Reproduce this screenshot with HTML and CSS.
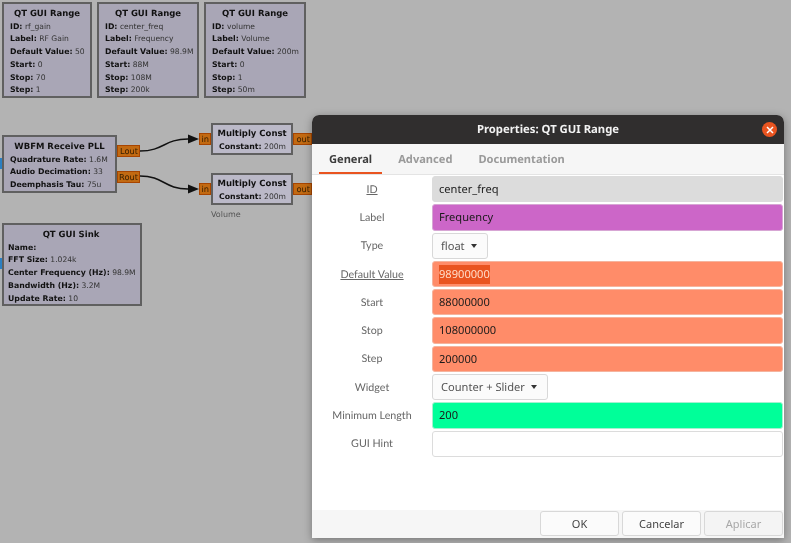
FILE: index.html
```html
<!DOCTYPE html>
<html>
  <head>
    <title>Properties: QT GUI Range</title>
    <link rel="stylesheet" href="styles.css">
  </head>
  <body>
    <div class="canvas">
      <div class="block range-a">
        <div class="block-title">QT GUI Range</div>
        <div><b>ID:</b> rf_gain</div>
        <div><b>Label:</b> RF Gain</div>
        <div><b>Default Value:</b> 50</div>
        <div><b>Start:</b> 0</div>
        <div><b>Stop:</b> 70</div>
        <div><b>Step:</b> 1</div>
      </div>
      <div class="block range-b">
        <div class="block-title">QT GUI Range</div>
        <div><b>ID:</b> center_freq</div>
        <div><b>Label:</b> Frequency</div>
        <div><b>Default Value:</b> 98.9M</div>
        <div><b>Start:</b> 88M</div>
        <div><b>Stop:</b> 108M</div>
        <div><b>Step:</b> 200k</div>
      </div>
      <div class="block range-c">
        <div class="block-title">QT GUI Range</div>
        <div><b>ID:</b> volume</div>
        <div><b>Label:</b> Volume</div>
        <div><b>Default Value:</b> 200m</div>
        <div><b>Start:</b> 0</div>
        <div><b>Stop:</b> 1</div>
        <div><b>Step:</b> 50m</div>
      </div>

      <div class="block wbfm">
        <div class="block-title">WBFM Receive PLL</div>
        <div><b>Quadrature Rate:</b> 1.6M</div>
        <div><b>Audio Decimation:</b> 33</div>
        <div><b>Deemphasis Tau:</b> 75u</div>
      </div>
      <div class="block sink">
        <div class="block-title">QT GUI Sink</div>
        <div><b>Name:</b></div>
        <div><b>FFT Size:</b> 1.024k</div>
        <div><b>Center Frequency (Hz):</b> 98.9M</div>
        <div><b>Bandwidth (Hz):</b> 3.2M</div>
        <div><b>Update Rate:</b> 10</div>
      </div>
      <div class="block mult mult-a">
        <div class="block-title">Multiply Const</div>
        <div><b>Constant:</b> 200m</div>
      </div>
      <div class="block mult mult-b">
        <div class="block-title">Multiply Const</div>
        <div><b>Constant:</b> 200m</div>
      </div>
      <div class="block-note">Volume</div>

      <div class="port lout">Lout</div>
      <div class="port rout">Rout</div>
      <div class="port in-a">in</div>
      <div class="port in-b">in</div>
      <div class="port out-a">out</div>
      <div class="port out-b">out</div>
      <div class="port-blue blue-a"></div>
      <div class="port-blue blue-b"></div>

      <svg class="wires" width="791" height="543" viewBox="0 0 791 543">
        <path d="M140 151 C164 151 164 139 188 139" fill="none" stroke="#111" stroke-width="1.5"/>
        <path d="M188 134.500 L199 139 L188 143.500 Z" fill="#111"/>
        <path d="M140 176 C164 176 164 189 188 189" fill="none" stroke="#111" stroke-width="1.5"/>
        <path d="M188 184.500 L199 189 L188 193.500 Z" fill="#111"/>
      </svg>

      <div class="dialog">
        <div class="titlebar">
          <span>Properties: QT GUI Range</span>
          <div class="close">
            <svg width="8" height="8" viewBox="0 0 8 8">
              <path d="M1 1 L7 7 M7 1 L1 7" stroke="#fff" stroke-width="1.500"/>
            </svg>
          </div>
        </div>
        <div class="tabs">
          <div class="tab active">General</div>
          <div class="tab">Advanced</div>
          <div class="tab">Documentation</div>
        </div>
        <div class="form">
          <label class="tip">ID</label>
          <div class="field f-grey">center_freq</div>
          <label>Label</label>
          <div class="field f-purple">Frequency</div>
          <label>Type</label>
          <div><div class="combo">float <i class="caret"></i></div></div>
          <label class="tip">Default Value</label>
          <div class="field f-orange"><span class="selected">98900000</span></div>
          <label>Start</label>
          <div class="field f-orange">88000000</div>
          <label>Stop</label>
          <div class="field f-orange">108000000</div>
          <label>Step</label>
          <div class="field f-orange">200000</div>
          <label>Widget</label>
          <div><div class="combo">Counter + Slider <i class="caret"></i></div></div>
          <label>Minimum Length</label>
          <div class="field f-green">200</div>
          <label>GUI Hint</label>
          <div class="field f-white"></div>
        </div>
        <div class="footer">
          <button type="button">OK</button>
          <button type="button">Cancelar</button>
          <button type="button" disabled>Aplicar</button>
        </div>
      </div>
    </div>
  </body>
</html>
```

FILE: styles.css
```css
body {
  margin: 0;
  background-color: #b3b3b3;
}

.canvas {
  position: relative;
  width: 791px;
  height: 543px;
  overflow: hidden;
  background-color: #b3b3b3;
  filter: blur(0.35px);
  text-rendering: geometricPrecision;
}

/* flowgraph blocks */
.block {
  position: absolute;
  box-sizing: border-box;
  padding: 4px 0 0 6px;
  border: 2px solid #606060;
  background-color: #a9a6b6;
  color: #333;
  font-family: "DejaVu Sans", sans-serif;
  font-size: 7.6px;
  line-height: 12.7px;
  white-space: nowrap;
}

.block b {
  color: #111;
  font-size: 7.8px;
}

.block-title {
  text-align: center;
  font-weight: bold;
  font-size: 8.5px;
  color: #111;
  margin-left: -6px;
}

.range-a { left: 2px; top: 2px; width: 90px; height: 96px; }
.range-b { left: 97px; top: 2px; width: 102px; height: 96px; }
.range-c { left: 204px; top: 2px; width: 102px; height: 96px; }
.wbfm { left: 2px; top: 135px; width: 115px; height: 58px; }
.sink { left: 2px; top: 223px; width: 140px; height: 83px; padding-left: 4px; }

.mult {
  width: 82px;
  height: 32px;
  padding-top: 3px;
  background-color: #bbb9c8;
}

.mult-a { left: 211px; top: 123px; }
.mult-b { left: 211px; top: 173px; }

.block-note {
  position: absolute;
  left: 211px;
  top: 210px;
  color: #555;
  font-family: "DejaVu Sans", sans-serif;
  font-size: 8px;
}

.port {
  position: absolute;
  box-sizing: border-box;
  border: 1px solid #a84500;
  background-color: #c26a12;
  color: #3a2000;
  font-family: "DejaVu Sans", sans-serif;
  font-size: 8.3px;
  line-height: 10px;
  text-align: right;
  padding-right: 1px;
  white-space: nowrap;
}

.lout { left: 117px; top: 145px; width: 23px; height: 12px; }
.rout { left: 117px; top: 171px; width: 23px; height: 12px; }
.in-a { left: 199px; top: 133px; width: 12px; height: 12px; }
.in-b { left: 199px; top: 183px; width: 12px; height: 12px; }
.out-a { left: 293px; top: 133px; width: 19px; height: 12px; }
.out-b { left: 293px; top: 183px; width: 19px; height: 12px; }

.port-blue {
  position: absolute;
  left: 0;
  width: 2px;
  height: 11px;
  background-color: #2b7fc2;
}

.blue-a { top: 158px; }
.blue-b { top: 258px; }

.wires {
  position: absolute;
  left: 0;
  top: 0;
}

/* properties dialog */
.dialog {
  position: absolute;
  left: 312px;
  top: 115px;
  width: 472px;
  height: 423px;
  display: flex;
  flex-direction: column;
  background-color: #fff;
  border-radius: 7px 7px 0 0;
  box-shadow: 0 2px 8px rgba(0, 0, 0, 0.35);
  overflow: hidden;
  font-family: "Noto Sans", sans-serif;
  font-size: 11.1px;
  color: #3d3d3d;
}

.titlebar {
  position: relative;
  height: 29px;
  background-color: #302e2e;
  color: #f2f2f2;
  font-weight: bold;
  font-size: 11.3px;
  display: flex;
  align-items: center;
  justify-content: center;
}

.close {
  position: absolute;
  right: 7px;
  top: 7px;
  width: 15px;
  height: 15px;
  border-radius: 50%;
  background-color: #e95420;
  display: flex;
  align-items: center;
  justify-content: center;
}

.tabs {
  display: flex;
  gap: 6px;
  padding-left: 7px;
  background-color: #f6f6f6;
  border-bottom: 1px solid #e4e4e4;
  box-sizing: border-box;
  height: 31px;
}

.tab {
  padding: 0 10px;
  line-height: 31px;
  font-weight: bold;
  color: #9a9a9a;
}

.tab.active {
  color: #3d3d3d;
  height: 30px;
  box-sizing: border-box;
  border-bottom: 2px solid #e95420;
}

.form {
  flex: 1;
  display: grid;
  grid-template-columns: 120px 1fr;
  grid-auto-rows: 26.3px;
  row-gap: 2px;
  align-items: center;
  padding: 1px 1px 0 0;
  align-content: start;
}

.form label {
  text-align: center;
  color: #666;
  font-family: Lato, sans-serif;
  font-size: 10.7px;
}

.form label.tip {
  text-decoration: underline;
}

.field {
  box-sizing: border-box;
  height: 26.3px;
  line-height: 25.5px;
  padding-left: 6px;
  border: 1px solid #dcdcdc;
  border-radius: 3px;
  color: #1a1a1a;
}

.f-grey { background-color: #dcdcdc; }
.f-purple { background-color: #cc66c8; border-color: #d7a6d4; }
.f-orange { background-color: #ff8c69; border-color: #f5b49e; }
.f-green { background-color: #00ff99; border-color: #a6f0d0; }
.f-white { background-color: #fff; }

.selected {
  background-color: #e95420;
  color: #ffdcc9;
  padding: 2px 0;
}

.combo {
  display: inline-block;
  box-sizing: border-box;
  height: 26.3px;
  line-height: 25.5px;
  padding: 0 10px 0 8px;
  border: 1px solid #d8d8d8;
  border-radius: 3px;
  background-color: #fbfbfb;
  color: #555;
}

.caret {
  display: inline-block;
  width: 0;
  height: 0;
  margin-left: 3px;
  vertical-align: 2px;
  border-left: 3.5px solid transparent;
  border-right: 3.5px solid transparent;
  border-top: 4px solid #333;
}

.footer {
  display: flex;
  justify-content: flex-end;
  gap: 3px;
  height: 28px;
  padding: 1px 1px 0 0;
  box-sizing: border-box;
  background-color: #f6f6f6;
}

button {
  width: 79px;
  height: 25px;
  padding: 0;
  border: 1px solid #d8d8d8;
  border-radius: 3px;
  background-color: #fbfbfb;
  color: #444;
  font-family: "Noto Sans", sans-serif;
  font-size: 11px;
}

button:disabled {
  color: #a8a8a8;
  background-color: #f4f4f4;
}
```
